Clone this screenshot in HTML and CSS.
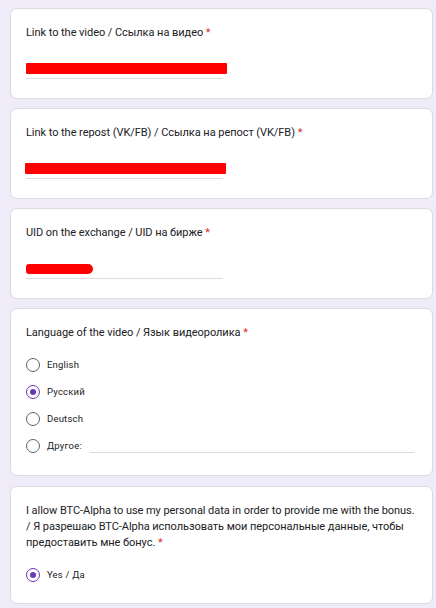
FILE: index.html
```html
<!DOCTYPE html>
<html lang="ru">
<head>
<meta charset="utf-8">
<link rel="stylesheet" href="styles.css">
</head>
<body>
<main class="form">
  <section class="card">
    <div class="title">Link to the video / Ссылка на видео <span class="req">*</span></div>
    <div class="answer"><div class="scribble" style="width:201px"></div></div>
  </section>
  <section class="card">
    <div class="title">Link to the repost (VK/FB) / Ссылка на репост (VK/FB) <span class="req">*</span></div>
    <div class="answer"><div class="scribble shift" style="width:201px"></div></div>
  </section>
  <section class="card">
    <div class="title">UID on the exchange / UID на бирже <span class="req">*</span></div>
    <div class="answer"><div class="scribble round" style="width:67px"></div></div>
  </section>
  <section class="card tall">
    <div class="title">Language of the video / Язык видеоролика <span class="req">*</span></div>
    <div class="options">
      <label class="option"><span class="radio"></span><span class="opt-text">English</span></label>
      <label class="option"><span class="radio checked"></span><span class="opt-text">Русский</span></label>
      <label class="option"><span class="radio"></span><span class="opt-text">Deutsch</span></label>
      <label class="option"><span class="radio"></span><span class="opt-text">Другое:</span><span class="other-line"></span></label>
    </div>
  </section>
  <section class="card last">
    <div class="title">I allow BTC-Alpha to use my personal data in order to provide me with the bonus. / Я разрешаю BTC-Alpha использовать мои персональные данные, чтобы предоставить мне бонус. <span class="req">*</span></div>
    <div class="options">
      <label class="option"><span class="radio checked"></span><span class="opt-text">Yes / Да</span></label>
    </div>
  </section>
</main>
</body>
</html>
```

FILE: styles.css
```css
* { box-sizing: border-box; }
html, body {
  margin: 0;
  background: #efebf8;
}
body {
  padding: 8px 3px 0 10px;
  font-family: Roboto, "Noto Sans", sans-serif;
  color: #202124;
}
.form {
  display: flex;
  flex-direction: column;
  gap: 9px;
}
.card {
  background: #fff;
  border: 1px solid #dadce0;
  border-radius: 7px;
  padding: 16px 15px 19px 15px;
}
.card.tall {
  padding-bottom: 16px;
}
.card.last {
  margin-top: 1px;
  padding-bottom: 15px;
}
.title {
  font-size: 11px;
  line-height: 16px;
  letter-spacing: -0.05px;
}
.req {
  color: #d93025;
}
.answer {
  margin-top: 21px;
  width: 197px;
  height: 17px;
  border-bottom: 1px solid #dadce0;
  padding-top: 1px;
}
.scribble {
  height: 11px;
  background: #ff0000;
  border-radius: 1px;
}
.scribble.shift {
  margin-left: -1px;
}
.scribble.round {
  border-radius: 3px 5px 5px 3px;
  height: 10px;
  margin-top: 1px;
}
.options {
  margin-top: 10px;
  display: flex;
  flex-direction: column;
}
.option {
  display: flex;
  align-items: center;
  height: 27px;
}
.radio {
  flex: none;
  width: 14px;
  height: 14px;
  border: 1.5px solid #5f6368;
  border-radius: 50%;
  display: flex;
  align-items: center;
  justify-content: center;
}
.radio.checked {
  border-color: #673ab7;
}
.radio.checked::after {
  content: "";
  width: 6px;
  height: 6px;
  border-radius: 50%;
  background: #673ab7;
}
.opt-text {
  margin-left: 7px;
  font-size: 9.5px;
  font-weight: 400;
  letter-spacing: 0.2px;
}
.other-line {
  flex: 1;
  align-self: flex-end;
  margin: 0 3px 6px 8px;
  border-bottom: 1px solid #dadce0;
}
```
